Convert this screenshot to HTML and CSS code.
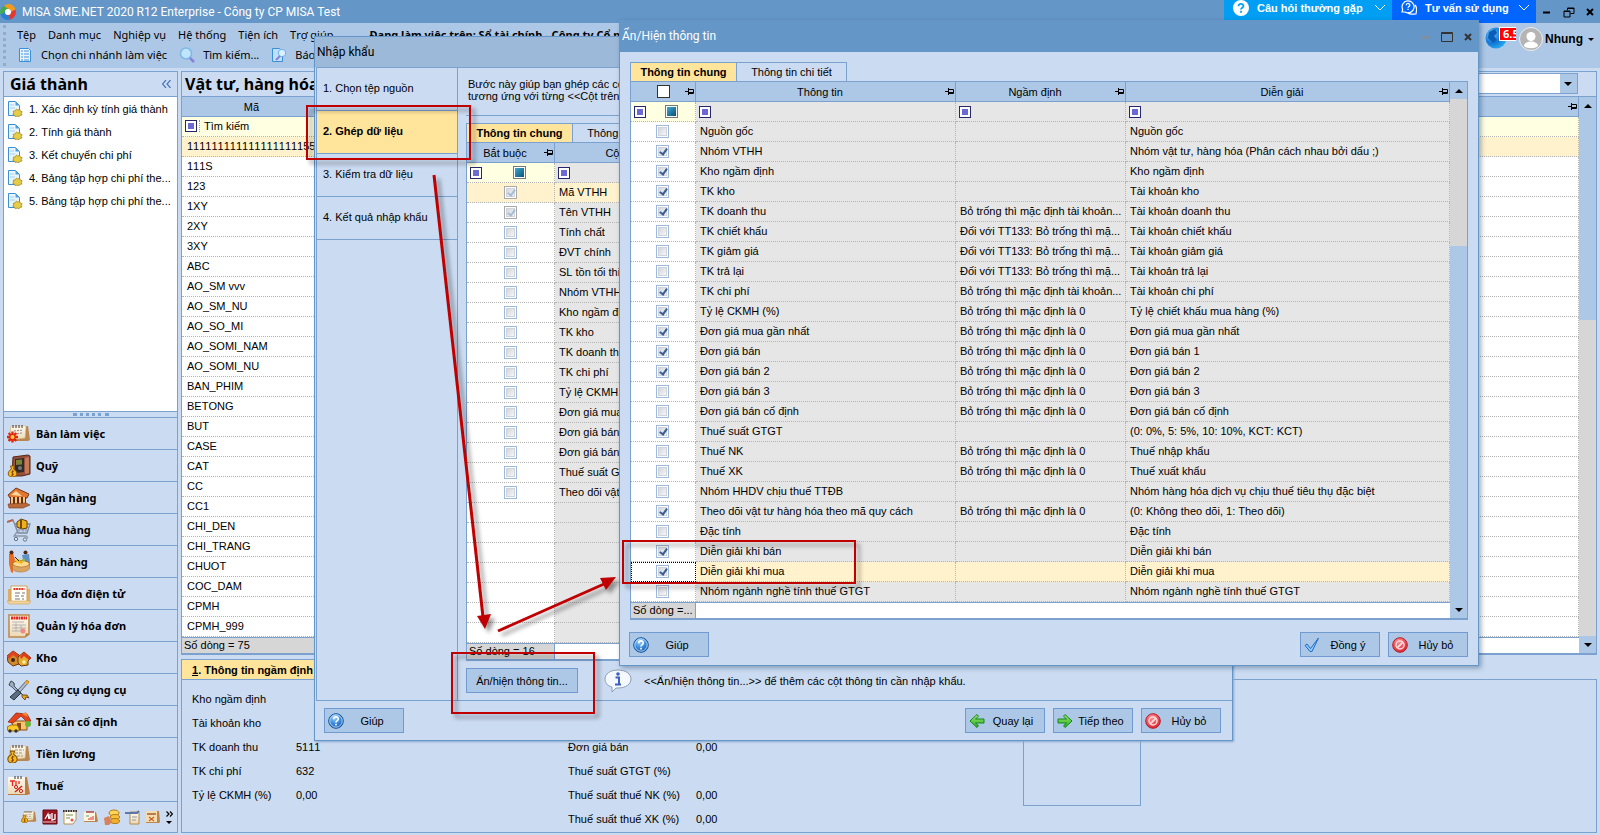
FILE: index.html
```html
<!DOCTYPE html>
<html lang="vi">
<head>
<meta charset="utf-8">
<title>MISA SME.NET 2020</title>
<link rel="stylesheet" href="styles.css">
</head>
<body>
<svg class="defs" aria-hidden="true">
  <defs>
    <linearGradient id="gPaper" x1="0" y1="0" x2="0" y2="1"><stop offset="0" stop-color="#fffaf0"/><stop offset="1" stop-color="#ecd9b4"/></linearGradient>
    <radialGradient id="gBlue" cx=".4" cy=".25" r=".8"><stop offset="0" stop-color="#9fd4fa"/><stop offset=".5" stop-color="#3e8fdd"/><stop offset="1" stop-color="#1557ab"/></radialGradient>
    <radialGradient id="gRed" cx=".4" cy=".25" r=".8"><stop offset="0" stop-color="#ff8d92"/><stop offset="1" stop-color="#d8232d"/></radialGradient>
    <linearGradient id="gGreen" x1="0" y1="0" x2="0" y2="1"><stop offset="0" stop-color="#a6ec70"/><stop offset="1" stop-color="#22aa22"/></linearGradient>
    <radialGradient id="gGlobe" cx=".3" cy=".3" r=".9"><stop offset="0" stop-color="#5cc4ff"/><stop offset=".5" stop-color="#1477d4"/><stop offset="1" stop-color="#2fc0fb"/></radialGradient>
  </defs>
  <symbol id="pin" viewBox="0 0 9 7"><path d="M0 3.500h3M3.500 0v7M3.500 1.500h5v4h-5M3 4.500h6" fill="none" stroke="#000"/></symbol>
  <symbol id="doc" viewBox="0 0 16 16"><path d="M1.500.5h7l4 4v10h-11z" fill="#e8f5ff" stroke="#3a90d8"/><path d="M8.500.5v4h4z" fill="#4c9fe0"/><path d="M3 4h4M3 7h5" stroke="#a6cdec"/><path d="M9.500 8l1.200 1 2-.6.5 1.600 2 .8-1 1.500.8 1.600-2 .5-1 1.300-1.800-.6-2 .5-.6-1.500-1.800-.7.8-1.600-.5-1.500 2-.4z" fill="#e5cd4a" stroke="#a5881c" stroke-width=".8"/></symbol>
  <symbol id="help" viewBox="0 0 16 16"><circle cx="8" cy="8" r="7.300" fill="url(#gBlue)" stroke="#17539b"/><circle cx="8" cy="8" r="6.200" fill="none" stroke="#cfe7fb" stroke-width=".8"/><path d="M5.700 6.200c0-3.200 4.700-3 4.600-.2 0 1.800-2.300 1.800-2.300 3.400M8 10.800v1.600" fill="none" stroke="#fff" stroke-width="1.600"/></symbol>
  <symbol id="no" viewBox="0 0 16 16"><circle cx="8" cy="8" r="7.300" fill="url(#gRed)" stroke="#b81c26"/><circle cx="8" cy="8" r="4" fill="none" stroke="#ffd9da" stroke-width="1.500"/><path d="M5 11l6-6" stroke="#ffd9da" stroke-width="1.800"/></symbol>
  <symbol id="left" viewBox="0 0 16 16"><path d="M1 8l7-6.500 1.500 1.800L6.500 6H15v4H6.500l3 2.700L8 14.500z" fill="url(#gGreen)" stroke="#15851c"/></symbol>
  <symbol id="right" viewBox="0 0 16 16"><path d="M15 8L8 1.500 6.500 3.300 9.500 6H1v4h8.500l-3 2.700L8 14.500z" fill="url(#gGreen)" stroke="#15851c"/></symbol>
  <symbol id="ok" viewBox="0 0 16 16"><path d="M1 8.500l2-1.500 3.500 4.500L14.500 1 8 14.500H6z" fill="#8fc6f7" stroke="#1c6dcc"/></symbol>
  <symbol id="cal" viewBox="0 0 24 24"><path d="M4 4h17l2 14-2 1H1z" fill="#b98650"/><path d="M4 4h15l-1 12-16 2z" fill="url(#gPaper)" stroke="#d8bd8d" stroke-width=".6"/><path d="M6 3v3M9 3v3M12 3v3M15 3v3" stroke="#40352c" stroke-width="1"/></symbol>
  <symbol id="bag" viewBox="0 0 10 12"><path d="M3 1h4L6 4c5 3 4 8-1 8S-1 7 4 4z" fill="#f7b91c" stroke="#8b5608"/><path d="M6.500 6.300C4 5.500 3.500 8 5 8.300s1.500 2.500-1.500 1.700M5 5.300v5.600" fill="none" stroke="#7c3d00" stroke-width=".8"/></symbol>
  <symbol id="i-desk" viewBox="0 0 24 24"><use href="#cal"/><path d="M7 9l9-1M7 12l8-1" stroke="#8a8a98" stroke-dasharray="2 1"/><g stroke="#e3240f" stroke-width="2.400"><path d="M5.500 9.500v11M0 15h11M1.700 11l7.600 8M9.300 11l-7.600 8"/></g><circle cx="5.500" cy="15" r="2" fill="#ffd23c"/></symbol>
  <symbol id="i-fund" viewBox="0 0 24 24"><path d="M6 3l15-2 2 1v18l-8 2H5z" fill="#985039" stroke="#57281a"/><path d="M8 5l9-1v14l-9 1z" fill="#2f2b28"/><path d="M9 6l6-.5v5L9 11z" fill="#7d8336"/><path d="M18 4l4-1v16l-4 1z" fill="#c57a58"/><circle cx="13" cy="14" r="2" fill="#777"/><use href="#bag" x="0" y="11" width="11" height="12"/></symbol>
  <symbol id="i-bank" viewBox="0 0 24 24"><path d="M1 9L9 2l13 6-2 4H3z" fill="#e2762e" stroke="#7c3615"/><path d="M4 9l5-4 6 5z" fill="#ffd79a"/><path d="M3 11h16v7H3z" fill="#5f2f17"/><path d="M5 11v8M9 11v8M13 11v8M17 11v7" stroke="#f7c382" stroke-width="2"/><path d="M1 18l18-1 4 2-7 3H2z" fill="#ba6a38" stroke="#7c3615" stroke-width=".6"/></symbol>
  <symbol id="i-buy" viewBox="0 0 24 24"><path d="M0 4l6-2 5 13h9l3-9H8" fill="none" stroke="#7e8aa0" stroke-width="1.300"/><path d="M0 4l6-2" stroke="#b5654d" stroke-width="2"/><path d="M9 9h12M10 12h10M12 6v9M16 6v9M19 6v9" stroke="#8b96ab" stroke-width=".8"/><path d="M10 4l4-3 6 2v7l-5 1-5-2z" fill="#f5b017" stroke="#644007"/><path d="M14 2v8" stroke="#3c2b10" stroke-width="1.500"/><path d="M10 14l-3 4h12l2 2" fill="none" stroke="#8b96ab" stroke-width="1.300"/><circle cx="9" cy="21" r="1.700" fill="#dde4ee" stroke="#68748a"/><circle cx="18" cy="21.500" r="1.700" fill="#dde4ee" stroke="#68748a"/></symbol>
  <symbol id="i-sell" viewBox="0 0 24 24"><path d="M2 4l4-1 2 7-2 5v8l-2-1-2-8z" fill="#ee6a1c"/><circle cx="4.500" cy="2.500" r="2" fill="#4d2916"/><circle cx="18.500" cy="2.500" r="2" fill="#4d2916"/><path d="M15 5l7-1 1 9-6 1z" fill="#5e92c4"/><ellipse cx="14" cy="14" rx="8.500" ry="3.500" fill="#ffd98e" stroke="#a76a23"/><path d="M5.500 14v5c2 4 14 4 17 0v-5c-2 4-14 4-17 0z" fill="#d9a561" stroke="#a76a23" stroke-width=".5"/><circle cx="11" cy="11" r="2" fill="#f3c01e"/><circle cx="14" cy="12" r="1.700" fill="#e9b116"/><circle cx="16.500" cy="10" r="1.500" fill="#9eb53a"/><path d="M8 7l4 4" stroke="#3d2612"/></symbol>
  <symbol id="i-einv" viewBox="0 0 24 24"><path d="M1 7h3v14H1zM20 7h3v14h-3z" fill="#dcae68"/><path d="M4 4h16v16H4z" fill="#fffdf6" stroke="#cfa15f"/><path d="M6.500 7h11" stroke="#e43524" stroke-width="2" stroke-dasharray="2 .6"/><path d="M8 11h5M8 14h4M8 17h5M15 11h3M14 14h3M15 17h2" stroke="#77777f"/><path d="M0 19h24l-2 3H2z" fill="#f0d49b" stroke="#cfa15f" stroke-width=".6"/></symbol>
  <symbol id="i-inv" viewBox="0 0 24 24"><path d="M2 1h20v19l-4 3H2z" fill="url(#gPaper)" stroke="#be8747" stroke-width="1.500"/><path d="M4 4h16" stroke="#e02a20" stroke-width="3" stroke-dasharray="2 .5"/><path d="M5 8h12M5 11h14M5 14h14M5 17h9M9 9v8M14 11v6" stroke="#a5a5aa" stroke-width=".8"/><circle cx="16" cy="17" r="2.500" fill="#ef8a86"/><path d="M18 23l1-4 3 1z" fill="#b97a3c"/></symbol>
  <symbol id="i-store" viewBox="0 0 24 24"><path d="M0 10l6-5 6 4v9l-6 2-5-4z" fill="#d18a2c" stroke="#6e350d"/><path d="M0 10l6-5 6 4-2 3-4-3-4 4z" fill="#df4320"/><path d="M11 11l6-5 7 6-3 3v4l-7 1-3-3z" fill="#e6ac30" stroke="#6e350d"/><path d="M13 11l4-5 7 6-2 2-5-4-3 3z" fill="#df3a1c"/><circle cx="6" cy="14" r="2" fill="#3f2412"/><circle cx="17" cy="16" r="1.800" fill="#fff0a0"/></symbol>
  <symbol id="i-tool" viewBox="0 0 24 24"><path d="M4 3l3 2 0 3 9 9 4 0 2 3-3-1-1 3-3-3 0-3-9-8-4-1z" fill="#f4a21d" stroke="#4a3a20" stroke-width=".8"/><path d="M4 3l3 2 0 3 4 4-2 1-4-4-3-2z" fill="#9fb0c4" stroke="#39485c" stroke-width=".8"/><path d="M20 2l2 2-9 10-2-2z" fill="#b5bfcc" stroke="#39485c" stroke-width=".8"/><path d="M11 12l3 3-7 7-4-3z" fill="#5c6c80" stroke="#2c3644"/><path d="M18 3l3-1 1 3-2 2z" fill="#f4a21d"/></symbol>
  <symbol id="i-asset" viewBox="0 0 24 24"><path d="M4 11h16v9H8z" fill="#f7c46c" stroke="#8b4a1a"/><path d="M1 12L9 3l11 1 4 7-4 1-6-6-8 7z" fill="#e2421c" stroke="#8a2408" stroke-width=".7"/><path d="M15 4l4-2 2 5z" fill="#f58b35"/><path d="M10 13h4v7h-4z" fill="#8c4b1c"/><path d="M0 17l4-2h6l2 3v3H1z" fill="#ffca25" stroke="#8b5608" stroke-width=".8"/><circle cx="3" cy="21" r="1.700" fill="#333"/><circle cx="9" cy="21" r="1.700" fill="#333"/><circle cx="21" cy="14" r="3" fill="#69b53c"/></symbol>
  <symbol id="i-pay" viewBox="0 0 24 24"><use href="#cal"/><path d="M8 8h9M8 11h8M10 14h6" stroke="#9b9b84" stroke-dasharray="3 1"/><use href="#bag" x="0" y="8" width="11" height="13"/></symbol>
  <symbol id="i-tax" viewBox="0 0 24 24"><path d="M1 3h19l3 17-3 1H1z" fill="#b97e46"/><path d="M1 3h17v17H1z" fill="url(#gPaper)"/><path d="M8 2v3M11 2v3M14 2v3" stroke="#333"/><path d="M3 7h5M5.500 7v5M9 7v5M12 7v3" stroke="#e3281d" stroke-width="1.300"/><path d="M8 18l7-6" stroke="#d2201a" stroke-width="1.500"/><circle cx="9" cy="13" r="1.600" fill="none" stroke="#d2201a"/><circle cx="14" cy="17" r="1.600" fill="none" stroke="#d2201a"/></symbol>
</svg>

<header class="titlebar">
  <svg class="logo" viewBox="0 0 16 16"><path d="M8 0a8 8 0 0 1 7.500 5.500L11 8a3 3 0 0 0-3-3L4 2A8 8 0 0 1 8 0z" fill="#f39a1e"/><path d="M15.500 5.500A8 8 0 0 1 10 15.700L8 11a3 3 0 0 0 3-3z" fill="#e5382c"/><path d="M10 15.700A8 8 0 0 1 .4 10.500L5 8a3 3 0 0 0 3 3z" fill="#2a7fd5"/><path d="M.4 10.500A8 8 0 0 1 4 2l4 3a3 3 0 0 0-3 3z" fill="#3fae49"/><circle cx="8" cy="8" r="3" fill="#fff"/></svg>
  <h1>MISA SME.NET 2020 R12 Enterprise - Công ty CP MISA Test</h1>
  <button class="faq"><svg class="s16" viewBox="0 0 16 16"><circle cx="8" cy="8" r="8" fill="#fff"/><path d="M5.500 6.200c0-3.200 5-3 4.900-.2 0 1.800-2.400 1.600-2.400 3.400M8 10.800v1.900" fill="none" stroke="#00a0f0" stroke-width="1.800"/></svg>Câu hỏi thường gặp<svg class="chev" viewBox="0 0 10 6"><path d="M0 0l5 5 5-5" fill="none" stroke="#fff"/></svg></button>
  <button class="faq consult"><svg class="s16" viewBox="0 0 16 16"><path d="M1 12l.7-2.500A6 6 0 1 1 4 12z" fill="none" stroke="#fff" stroke-width="1.200"/><path d="M14 5c3 3 1 7 1 9-4 0-6 1-8-1" fill="none" stroke="#fff" stroke-width="1.200"/><path d="M5.300 5.200c0-2.400 3.600-2.200 3.500 0 0 1.300-1.800 1.300-1.800 2.600M7 8.700v1.300" fill="none" stroke="#fff" stroke-width="1.300"/></svg>Tư vấn sử dụng<svg class="chev" viewBox="0 0 10 6"><path d="M0 0l5 5 5-5" fill="none" stroke="#fff"/></svg></button>
  <div class="winctl">
    <button aria-label="Minimize"><svg viewBox="0 0 12 12"><path d="M2 6.500h7" stroke="#000" stroke-width="2"/></svg></button>
    <button aria-label="Restore"><svg viewBox="0 0 12 12"><path d="M1 5h6v6H1zM1 5.500h6M4.500 4.500V2h6.500v5.500H7.500M4.500 2.500H11" fill="none" stroke="#000"/></svg></button>
    <button aria-label="Close"><svg viewBox="0 0 12 12"><path d="M3 3l6 6M9 3L3 9" stroke="#000" stroke-width="2"/></svg></button>
  </div>
</header>

<div class="bars">
  <div class="barrows">
    <nav class="menu">
      <button>Tệp</button><button>Danh mục</button><button>Nghiệp vụ</button><button>Hệ thống</button><button>Tiện ích</button><button>Trợ giúp</button>
      <strong>Đang làm việc trên: Sổ tài chính - Công ty Cổ phần MISA Test</strong>
    </nav>
    <div class="toolbar">
      <button><svg class="s16" viewBox="0 0 16 16"><path d="M2.500 1.500h9l2 2v11h-11z" fill="#e3f3ff" stroke="#3a90d8"/><path d="M4 4h2M4 7h2M4 10h2M4 13h2M7 4h5M7 7h5M7 10h5M7 13h5" stroke="#4c8fd0"/></svg>Chọn chi nhánh làm việc</button>
      <button><svg class="s16" viewBox="0 0 16 16"><circle cx="7" cy="6.500" r="5.500" fill="#bfe5fb" stroke="#7fb7e6" stroke-width="1.500"/><path d="M11 11l4 4" stroke="#8a82d8" stroke-width="2.500"/></svg>Tìm kiếm...</button>
      <button><svg class="s16" viewBox="0 0 16 16"><path d="M1.500 1.500h7l3 3v10h-10z" fill="#bfe0fa" stroke="#3a90d8"/><circle cx="11" cy="6" r="3.700" fill="#d9f0ff" stroke="#6faee4"/><path d="M9 9l-4 4" stroke="#8a82d8" stroke-width="2"/></svg>Báo cáo</button>
    </div>
  </div>
  <div class="user">
    <span class="globe"><svg viewBox="0 0 22 22"><circle cx="11" cy="11" r="10.500" fill="url(#gGlobe)"/><path d="M4 5l6-3 2 4-3 3 3 4-4 3-5-5z" fill="#0c5db5"/></svg><b>6.5</b></span>
    <svg class="avatar" viewBox="0 0 24 24"><circle cx="12" cy="12" r="11.500" fill="#b5b5b5" stroke="#eee"/><circle cx="12" cy="9.500" r="4.500" fill="#fff"/><path d="M5 19c0-6 14-6 14 0-3 3-11 3-14 0z" fill="#fff"/></svg>
    <button>Nhung<i class="caret"></i></button>
  </div>
</div>

<div class="work">
  <aside class="side">
    <h2>Giá thành<svg viewBox="0 0 9 8"><path d="M4 0L.5 4 4 8M8.500 0L5 4l3.500 4" fill="none" stroke="#4a76b8" stroke-width="1.200"/></svg></h2>
    <ul class="tasks">
      <li><a href="#"><svg class="s16"><use href="#doc"/></svg>1. Xác định kỳ tính giá thành</a></li>
      <li><a href="#"><svg class="s16"><use href="#doc"/></svg>2. Tính giá thành</a></li>
      <li><a href="#"><svg class="s16"><use href="#doc"/></svg>3. Kết chuyển chi phí</a></li>
      <li><a href="#"><svg class="s16"><use href="#doc"/></svg>4. Bảng tập hợp chi phí the...</a></li>
      <li><a href="#"><svg class="s16"><use href="#doc"/></svg>5. Bảng tập hợp chi phí the...</a></li>
    </ul>
    <div class="grip"><i></i></div>
    <nav class="mods">
      <button><svg><use href="#i-desk"/></svg>Bàn làm việc</button>
      <button><svg><use href="#i-fund"/></svg>Quỹ</button>
      <button><svg><use href="#i-bank"/></svg>Ngân hàng</button>
      <button><svg><use href="#i-buy"/></svg>Mua hàng</button>
      <button><svg><use href="#i-sell"/></svg>Bán hàng</button>
      <button><svg><use href="#i-einv"/></svg>Hóa đơn điện tử</button>
      <button><svg><use href="#i-inv"/></svg>Quản lý hóa đơn</button>
      <button><svg><use href="#i-store"/></svg>Kho</button>
      <button><svg><use href="#i-tool"/></svg>Công cụ dụng cụ</button>
      <button><svg><use href="#i-asset"/></svg>Tài sản cố định</button>
      <button><svg><use href="#i-pay"/></svg>Tiền lương</button>
      <button><svg><use href="#i-tax"/></svg>Thuế</button>
    </nav>
    <div class="shortcuts">
      <svg class="s16"><use href="#i-pay"/></svg>
      <svg class="s16" viewBox="0 0 16 16"><path d="M1 1h14v14H1z" fill="#9b1420" stroke="#5e0a12"/><path d="M3 10l3-5 1 5M8 10V5M10 4v7l3-1V5" fill="none" stroke="#fff" stroke-width="1.300"/><path d="M1 13h13" stroke="#e6c7c9"/></svg>
      <svg class="s16" viewBox="0 0 16 16"><path d="M2 2h12v9l-3 4H2z" fill="#fffdf6" stroke="#b99156"/><path d="M1 2h14" stroke="#333" stroke-width="2" stroke-dasharray="1.500 1"/><path d="M4 6h7M4 9h4" stroke="#7b8f50"/><circle cx="10" cy="11" r="1.500" fill="#e2574c"/></svg>
      <svg class="s16" viewBox="0 0 16 16"><path d="M1 3h12l2 9-1 1H1z" fill="#b98650"/><path d="M1 3h11v9H1z" fill="#fff5dd"/><path d="M3 3h8" stroke="#a44" stroke-width="1.500"/><path d="M8 11V8M10 11V7M6 11V9" stroke="#d33"/><path d="M3 7h3" stroke="#4a8"/></svg>
      <svg class="s16" viewBox="0 0 16 16"><ellipse cx="10" cy="4" rx="5" ry="3" fill="#ffd65a" stroke="#b57a10"/><ellipse cx="11" cy="8" rx="4.500" ry="2.500" fill="#f8c33c" stroke="#b57a10"/><ellipse cx="11" cy="12" rx="4.500" ry="2.500" fill="#f0b22c" stroke="#b57a10"/><path d="M0 9l5-2 3 6-3 3H1z" fill="#d8825a"/></svg>
      <svg class="s16" viewBox="0 0 16 16"><path d="M5 3h9v12H5z" fill="url(#gPaper)" stroke="#b78a4a"/><path d="M0 4h12l2-2" stroke="#5b77ad" stroke-width="2" fill="none"/><path d="M7 8h5M7 11h4" stroke="#8d9aad"/></svg>
      <svg class="s16" viewBox="0 0 16 16"><path d="M1 2h13l1 11-1 1H1z" fill="#b98650"/><path d="M1 2h11v11H1z" fill="#f5ddb2"/><path d="M2 5h9" stroke="#a55c2a" stroke-width="1.500"/><path d="M4 8l5 4M9 8l-5 4" stroke="#c5642a" stroke-width="1.300"/></svg>
      <span class="more"><svg viewBox="0 0 7 6"><path d="M0.500 0.500l2.500 2.500-2.500 2.500M4 .5l2.500 2.500-2.500 2.500" fill="none" stroke="#000" stroke-width="1.200"/></svg><i class="caret"></i></span>
    </div>
  </aside>

  <main class="main">
    <section class="list">
      <div class="listhead"><h2>Vật tư, hàng hóa, dịch vụ</h2><select aria-label="Nhóm"><option></option></select></div>
      <div class="gridbox">
        <div class="gridmain">
          <table class="grid codes">
            <colgroup><col class="w140"><col></colgroup>
            <thead><tr><th>Mã</th><th><svg class="pin"><use href="#pin"/></svg></th></tr></thead>
            <tbody>
              <tr class="filter"><td><i class="op"></i><span>Tìm kiếm</span></td><td></td></tr>
              <tr class="sel"><td>111111111111111111155</td><td></td></tr>
              <tr><td>111S</td><td></td></tr><tr><td>123</td><td></td></tr><tr><td>1XY</td><td></td></tr><tr><td>2XY</td><td></td></tr><tr><td>3XY</td><td></td></tr><tr><td>ABC</td><td></td></tr><tr><td>AO_SM vvv</td><td></td></tr><tr><td>AO_SM_NU</td><td></td></tr><tr><td>AO_SO_MI</td><td></td></tr><tr><td>AO_SOMI_NAM</td><td></td></tr><tr><td>AO_SOMI_NU</td><td></td></tr><tr><td>BAN_PHIM</td><td></td></tr><tr><td>BETONG</td><td></td></tr><tr><td>BUT</td><td></td></tr><tr><td>CASE</td><td></td></tr><tr><td>CAT</td><td></td></tr><tr><td>CC</td><td></td></tr><tr><td>CC1</td><td></td></tr><tr><td>CHI_DEN</td><td></td></tr><tr><td>CHI_TRANG</td><td></td></tr><tr><td>CHUOT</td><td></td></tr><tr><td>COC_DAM</td><td></td></tr><tr><td>CPMH</td><td></td></tr><tr><td>CPMH_999</td><td></td></tr>
            </tbody>
          </table>
          <div class="gridfoot"><span class="w140">Số dòng = 75</span></div>
        </div>
        <div class="scroll"><i class="up"></i><b class="thumb mainthumb"></b><b class="rest"></b><i class="down"></i></div>
      </div>
    </section>

    <section class="detail">
      <div class="dtabs"><button><span><u>1</u>. Thông tin ngầm định</span></button></div>
      <div class="dbody">
        <dl class="fields">
          <dt>Kho ngầm định</dt><dd></dd><dt></dt><dd></dd>
          <dt>Tài khoản kho</dt><dd></dd><dt></dt><dd></dd>
          <dt>TK doanh thu</dt><dd>5111</dd><dt>Đơn giá bán</dt><dd>0,00</dd>
          <dt>TK chi phí</dt><dd>632</dd><dt>Thuế suất GTGT (%)</dt><dd></dd>
          <dt>Tỷ lệ CKMH (%)</dt><dd>0,00</dd><dt>Thuế suất thuế NK (%)</dt><dd>0,00</dd>
          <dt></dt><dd></dd><dt>Thuế suất thuế XK (%)</dt><dd>0,00</dd>
        </dl>
        <div class="photo"></div>
      </div>
    </section>
  </main>
</div>

<section class="dlg import" role="dialog" aria-label="Nhập khẩu">
  <h2 class="dtitle">Nhập khẩu</h2>
  <div class="wizard">
    <ol class="steps">
      <li>1. Chọn tệp nguồn</li><li class="on">2. Ghép dữ liệu</li><li>3. Kiểm tra dữ liệu</li><li>4. Kết quả nhập khẩu</li>
    </ol>
    <div class="stepbody">
      <p class="hint">Bước này giúp bạn ghép các cột trên phần mềm<br>tương ứng với từng &lt;&lt;Cột trên phần mềm&gt;&gt;</p>
      <div class="tabs"><button class="on">Thông tin chung</button><button>Thông tin chi tiết</button></div>
      <div class="gridbox">
        <div class="gridmain">
          <table class="grid gray">
            <colgroup><col class="w88"><col class="w196"><col></colgroup>
            <thead><tr><th class="padpin">Bắt buộc<svg class="pin"><use href="#pin"/></svg></th><th>Cột trên phần mềm</th><th>Diễn giải</th></tr></thead>
            <tbody>
              <tr class="filter"><td><i class="op"></i><i class="tri"></i></td><td><i class="op"></i></td><td></td></tr>
              <tr class="sel"><td><input type="checkbox" checked disabled aria-label="Mã VTHH"></td><td>Mã VTHH</td><td></td></tr>
              <tr><td><input type="checkbox" checked disabled aria-label="Tên VTHH"></td><td>Tên VTHH</td><td></td></tr>
              <tr><td><input type="checkbox" aria-label="Tính chất"></td><td>Tính chất</td><td></td></tr>
              <tr><td><input type="checkbox" aria-label="ĐVT chính"></td><td>ĐVT chính</td><td></td></tr>
              <tr><td><input type="checkbox" aria-label="SL tồn tối thiểu"></td><td>SL tồn tối thiểu</td><td></td></tr>
              <tr><td><input type="checkbox" aria-label="Nhóm VTHH"></td><td>Nhóm VTHH</td><td></td></tr>
              <tr><td><input type="checkbox" aria-label="Kho ngầm định"></td><td>Kho ngầm định</td><td></td></tr>
              <tr><td><input type="checkbox" aria-label="TK kho"></td><td>TK kho</td><td></td></tr>
              <tr><td><input type="checkbox" aria-label="TK doanh thu"></td><td>TK doanh thu</td><td></td></tr>
              <tr><td><input type="checkbox" aria-label="TK chi phí"></td><td>TK chi phí</td><td></td></tr>
              <tr><td><input type="checkbox" aria-label="Tỷ lệ CKMH (%)"></td><td>Tỷ lệ CKMH (%)</td><td></td></tr>
              <tr><td><input type="checkbox" aria-label="Đơn giá mua gần nhất"></td><td>Đơn giá mua gần nhất</td><td></td></tr>
              <tr><td><input type="checkbox" aria-label="Đơn giá bán"></td><td>Đơn giá bán</td><td></td></tr>
              <tr><td><input type="checkbox" aria-label="Đơn giá bán 2"></td><td>Đơn giá bán 2</td><td></td></tr>
              <tr><td><input type="checkbox" aria-label="Thuế suất GTGT"></td><td>Thuế suất GTGT</td><td></td></tr>
              <tr><td><input type="checkbox" aria-label="Theo dõi vật tư"></td><td>Theo dõi vật tư hàng hóa</td><td></td></tr>
              <tr><td></td><td></td><td></td></tr><tr><td></td><td></td><td></td></tr><tr><td></td><td></td><td></td></tr><tr><td></td><td></td><td></td></tr><tr><td></td><td></td><td></td></tr><tr><td></td><td></td><td></td></tr><tr><td></td><td></td><td></td></tr>
            </tbody>
          </table>
          <div class="gridfoot"><span class="w88">Số dòng = 16</span></div>
        </div>
      </div>
      <div class="note">
        <button class="btn wide">Ẩn/hiện thông tin...</button>
        <svg class="balloon" viewBox="0 0 28 24"><path d="M14 1c8 0 13 4 13 9s-5 9-13 9l-2 0-4 4v-5C3 17 1 13 1 10c0-5 5-9 13-9z" fill="#f4f9ff" stroke="#8d9db5"/><circle cx="14" cy="5" r="1.800" fill="#3d5fc0"/><path d="M11.500 8.500h3.500v6M11 15.500h6" fill="none" stroke="#3d5fc0" stroke-width="2"/></svg>
        <span>&lt;&lt;Ẩn/hiện thông tin...&gt;&gt; để thêm các cột thông tin cần nhập khẩu.</span>
      </div>
    </div>
  </div>
  <div class="dfoot">
    <button class="btn"><svg class="s16"><use href="#help"/></svg><span>Giúp</span></button>
    <button class="btn push"><svg class="s16"><use href="#left"/></svg><span>Quay lại</span></button>
    <button class="btn"><svg class="s16"><use href="#right"/></svg><span>Tiếp theo</span></button>
    <button class="btn"><svg class="s16"><use href="#no"/></svg><span>Hủy bỏ</span></button>
  </div>
</section>

<section class="dlg show" role="dialog" aria-label="Ẩn/Hiện thông tin">
  <h2 class="dtitle">Ẩn/Hiện thông tin
    <span class="dctl"><svg viewBox="0 0 12 12"><path d="M2 6.500h7" stroke="#8c8c8c" stroke-width="2"/></svg><svg viewBox="0 0 12 12"><path d="M.5 1.500h11v9H.5zM0 2.500h12" fill="none" stroke="#333"/></svg><svg viewBox="0 0 12 12"><path d="M3 3l6 6M9 3L3 9" stroke="#333" stroke-width="2"/></svg></span>
  </h2>
  <div class="showbody">
    <div class="tabs"><button class="on">Thông tin chung</button><button>Thông tin chi tiết</button></div>
    <div class="gridbox">
      <div class="gridmain">
        <table class="grid gray">
          <colgroup><col class="w65"><col class="w260"><col class="w170"><col></colgroup>
          <thead><tr><th><input type="checkbox" class="all" aria-label="Tất cả"><svg class="pin"><use href="#pin"/></svg></th><th class="padpin">Thông tin<svg class="pin"><use href="#pin"/></svg></th><th class="padpin">Ngầm định<svg class="pin"><use href="#pin"/></svg></th><th class="padpin">Diễn giải<svg class="pin"><use href="#pin"/></svg></th></tr></thead>
          <tbody>
            <tr class="filter"><td><i class="op"></i><i class="tri"></i></td><td><i class="op"></i></td><td><i class="op"></i></td><td><i class="op"></i></td></tr>
            <tr><td><input type="checkbox" aria-label="Nguồn gốc"></td><td>Nguồn gốc</td><td></td><td>Nguồn gốc</td></tr>
            <tr><td><input type="checkbox" checked aria-label="Nhóm VTHH"></td><td>Nhóm VTHH</td><td></td><td>Nhóm vật tư, hàng hóa (Phân cách nhau bởi dấu ;)</td></tr>
            <tr><td><input type="checkbox" checked aria-label="Kho ngầm định"></td><td>Kho ngầm định</td><td></td><td>Kho ngầm định</td></tr>
            <tr><td><input type="checkbox" checked aria-label="TK kho"></td><td>TK kho</td><td></td><td>Tài khoản kho</td></tr>
            <tr><td><input type="checkbox" checked aria-label="TK doanh thu"></td><td>TK doanh thu</td><td>Bỏ trống thì mặc định tài khoản...</td><td>Tài khoản doanh thu</td></tr>
            <tr><td><input type="checkbox" aria-label="TK chiết khấu"></td><td>TK chiết khấu</td><td>Đối với TT133: Bỏ trống thì mặ...</td><td>Tài khoản chiết khấu</td></tr>
            <tr><td><input type="checkbox" aria-label="TK giảm giá"></td><td>TK giảm giá</td><td>Đối với TT133: Bỏ trống thì mặ...</td><td>Tài khoản giảm giá</td></tr>
            <tr><td><input type="checkbox" aria-label="TK trả lại"></td><td>TK trả lại</td><td>Đối với TT133: Bỏ trống thì mặ...</td><td>Tài khoản trả lại</td></tr>
            <tr><td><input type="checkbox" checked aria-label="TK chi phí"></td><td>TK chi phí</td><td>Bỏ trống thì mặc định tài khoản...</td><td>Tài khoản chi phí</td></tr>
            <tr><td><input type="checkbox" checked aria-label="Tỷ lệ CKMH (%)"></td><td>Tỷ lệ CKMH (%)</td><td>Bỏ trống thì mặc định là 0</td><td>Tỷ lệ chiết khấu mua hàng (%)</td></tr>
            <tr><td><input type="checkbox" checked aria-label="Đơn giá mua gần nhất"></td><td>Đơn giá mua gần nhất</td><td>Bỏ trống thì mặc định là 0</td><td>Đơn giá mua gần nhất</td></tr>
            <tr><td><input type="checkbox" checked aria-label="Đơn giá bán"></td><td>Đơn giá bán</td><td>Bỏ trống thì mặc định là 0</td><td>Đơn giá bán 1</td></tr>
            <tr><td><input type="checkbox" checked aria-label="Đơn giá bán 2"></td><td>Đơn giá bán 2</td><td>Bỏ trống thì mặc định là 0</td><td>Đơn giá bán 2</td></tr>
            <tr><td><input type="checkbox" aria-label="Đơn giá bán 3"></td><td>Đơn giá bán 3</td><td>Bỏ trống thì mặc định là 0</td><td>Đơn giá bán 3</td></tr>
            <tr><td><input type="checkbox" aria-label="Đơn giá bán cố định"></td><td>Đơn giá bán cố định</td><td>Bỏ trống thì mặc định là 0</td><td>Đơn giá bán cố định</td></tr>
            <tr><td><input type="checkbox" checked aria-label="Thuế suất GTGT"></td><td>Thuế suất GTGT</td><td></td><td>(0: 0%, 5: 5%, 10: 10%, KCT: KCT)</td></tr>
            <tr><td><input type="checkbox" aria-label="Thuế NK"></td><td>Thuế NK</td><td>Bỏ trống thì mặc định là 0</td><td>Thuế nhập khẩu</td></tr>
            <tr><td><input type="checkbox" aria-label="Thuế XK"></td><td>Thuế XK</td><td>Bỏ trống thì mặc định là 0</td><td>Thuế xuất khẩu</td></tr>
            <tr><td><input type="checkbox" aria-label="Nhóm HHDV chịu thuế TTĐB"></td><td>Nhóm HHDV chịu thuế TTĐB</td><td></td><td>Nhóm hàng hóa dịch vụ chịu thuế tiêu thụ đặc biệt</td></tr>
            <tr><td><input type="checkbox" checked aria-label="Theo dõi vật tư hàng hóa theo mã quy cách"></td><td>Theo dõi vật tư hàng hóa theo mã quy cách</td><td>Bỏ trống thì mặc định là 0</td><td>(0: Không theo dõi, 1: Theo dõi)</td></tr>
            <tr><td><input type="checkbox" aria-label="Đặc tính"></td><td>Đặc tính</td><td></td><td>Đặc tính</td></tr>
            <tr><td><input type="checkbox" checked aria-label="Diễn giải khi bán"></td><td>Diễn giải khi bán</td><td></td><td>Diễn giải khi bán</td></tr>
            <tr class="sel"><td class="focus"><input type="checkbox" checked aria-label="Diễn giải khi mua"></td><td>Diễn giải khi mua</td><td></td><td>Diễn giải khi mua</td></tr>
            <tr><td><input type="checkbox" aria-label="Nhóm ngành nghề tính thuế GTGT"></td><td>Nhóm ngành nghề tính thuế GTGT</td><td></td><td>Nhóm ngành nghề tính thuế GTGT</td></tr>
          </tbody>
        </table>
        <div class="gridfoot"><span class="w65">Số dòng =...</span></div>
      </div>
      <div class="scroll"><i class="up"></i><b class="rest above"></b><b class="thumb fill"></b><i class="down"></i></div>
    </div>
  </div>
  <div class="dfoot">
    <button class="btn"><svg class="s16"><use href="#help"/></svg><span>Giúp</span></button>
    <button class="btn push"><svg class="s16"><use href="#ok"/></svg><span>Đồng ý</span></button>
    <button class="btn"><svg class="s16"><use href="#no"/></svg><span>Hủy bỏ</span></button>
  </div>
</section>

<svg class="marks" aria-hidden="true">
  <g fill="none" stroke="#c00000" stroke-width="2">
    <rect x="307" y="106" width="163" height="53"/>
    <rect x="452" y="653" width="142" height="60"/>
    <rect x="623" y="541" width="232" height="42"/>
  </g>
  <g fill="#c00000" stroke="#c00000">
    <path d="M434 175l49 442" stroke-width="3"/><path d="M477 616l14-2-6 15z" stroke="none"/>
    <path d="M498 631l106-47" stroke-width="3"/><path d="M600 578l16-1-10 13z" stroke="none"/>
  </g>
</svg>
</body>
</html>
```
FILE: styles.css
```css
* { box-sizing: border-box; }
body {
  margin: 0; min-height: 100vh; display: flex; flex-direction: column; position: relative;
  background: #cbdbf1; color: #000; font: 11px/14px "Noto Sans", Tahoma, sans-serif; font-kerning: none; overflow: hidden;
}
h1, h2, p, ul, ol, dl, dd { margin: 0; padding: 0; }
ul, ol { list-style: none; }
button { font: inherit; font-kerning: none; color: inherit; background: none; border: 0; padding: 0; white-space: nowrap; }
a { color: inherit; text-decoration: none; }
svg { display: block; flex: none; }
.defs { position: absolute; width: 0; height: 0; }
.s16 { width: 16px; height: 16px; }
.caret { display: inline-block; border: 3px solid transparent; border-top-color: #000; border-bottom: 0; }

.titlebar { height: 23px; display: flex; align-items: center; background: #6496c7; color: #fff; }
.logo { width: 16px; height: 16px; }
.titlebar h1 { flex: 1; margin-left: 6px; font: 12px/16px Roboto, Tahoma, sans-serif; }
.faq { align-self: stretch; display: flex; align-items: center; gap: 8px; width: 168px; padding: 0 7px 7px 9px; background: #009ff3; font: bold 11px/16px "Liberation Sans", Arial, sans-serif; }
.consult { width: 144px; background: #0066ff; }
.chev { width: 10px; height: 6px; margin-left: auto; }
.winctl { display: flex; width: 64px; justify-content: space-between; padding: 0 4px 0 5px; }
.winctl svg { width: 12px; height: 12px; }

.bars { display: flex; justify-content: space-between; height: 45px; background: #adc8e7; }
.barrows { display: flex; flex-direction: column; border-left: 3px dotted #93abc9; margin: 2px 0 2px 3px; padding-left: 11px; }
.menu { display: flex; align-items: center; gap: 12px; height: 19px; white-space: nowrap; }
.menu strong { margin-left: 24px; }
.toolbar { display: flex; align-items: center; gap: 12px; height: 22px; }
.toolbar button { display: flex; align-items: center; gap: 8px; }
.user { display: flex; align-items: flex-start; padding: 4px 6px 0 0; }
.globe { position: relative; width: 34px; height: 24px; }
.globe svg { width: 22px; height: 22px; }
.globe b { position: absolute; left: 14px; top: 0; width: 17px; overflow: hidden; padding-left: 3px; background: #f00; border: 1px solid #fff; border-right: 0; color: #fff; line-height: 12px; }
.avatar { width: 24px; height: 24px; margin-right: 2px; }
.user button { font: bold 12px/24px "Liberation Sans", Arial, sans-serif; display: flex; align-items: center; gap: 5px; }

.work { flex: 1; display: flex; gap: 3px; padding: 3px 3px 2px; }
.side { width: 175px; flex: none; display: flex; flex-direction: column; border: 1px solid #7ba1cf; }
.side h2, .listhead h2 { font-size: 16px; line-height: 24px; }
.side h2 { display: flex; justify-content: space-between; align-items: center; padding: 0 6px; height: 25px; border-bottom: 1px solid #7ba1cf; }
.side h2 svg { width: 9px; height: 8px; }
.tasks { flex: 1; background: #fff; font-family: "Liberation Sans", Arial, sans-serif; }
.tasks a { display: flex; align-items: center; gap: 6px; height: 23px; padding-left: 3px; white-space: nowrap; }
.grip { height: 6px; border-top: 1px solid #7ba1cf; display: flex; justify-content: center; }
.grip i { width: 36px; margin: 1px 0; border-top: 3px dotted #7ba1cf; }
.mods button { width: 100%; height: 32px; display: flex; align-items: center; gap: 5px; padding-left: 3px; border-top: 1px solid #7ba1cf; font-weight: bold; }
.mods svg { width: 24px; height: 24px; }
.shortcuts { height: 31px; border-top: 1px solid #7ba1cf; display: flex; align-items: center; justify-content: space-between; padding: 0 4px 0 17px; }
.more { display: flex; flex-direction: column; align-items: center; gap: 4px; }
.more svg { width: 7px; height: 6px; }

.main { flex: 1; min-width: 0; display: flex; flex-direction: column; gap: 4px; }
.list { border: 1px solid #7ba1cf; border-bottom: 0; }
.listhead { position: relative; height: 24px; display: flex; justify-content: space-between; padding-left: 3px; }
.listhead select { width: 300px; height: 21px; margin: 1px 18px 0 0; border: 1px solid #7ba1cf; background: linear-gradient(90deg, #fff 281px, #adc8e7 281px); appearance: none; }
.listhead::after { content: ""; position: absolute; right: 24px; top: 10px; border: 4px solid transparent; border-top-color: #000; border-bottom: 0; }

.gridbox { display: flex; border: 1px solid #7ba1cf; border-bottom-width: 2px; font-family: "Liberation Sans", Arial, sans-serif; }
.list .gridbox { border-left: 0; border-right: 0; }
.gridmain { flex: 1; min-width: 0; background: #fff; }
.grid { width: 100%; table-layout: fixed; border-spacing: 0; }
.grid th { position: relative; height: 20px; padding: 0; background: #adc8e7; border-right: 1px solid #7ba1cf; border-bottom: 1px solid #7ba1cf; font-weight: 400; text-align: center; white-space: nowrap; }
.grid th.padpin { padding-right: 11px; }
.pin { position: absolute; right: 1px; top: 6px; width: 9px; height: 7px; }
.grid td { height: 20px; padding: 0 0 0 4px; border-right: 1px dotted #b4b4b4; border-bottom: 1px dotted #b4b4b4; white-space: nowrap; overflow: hidden; line-height: 15px; }
.codes td { padding-left: 5px; }
.gray td { background: #e6e6e6; }
.gray td:first-child { background: #fff; padding: 0 1px 0 0; text-align: center; }
.grid .sel td { background: #fff2cc; }
.grid .sel td.focus { background: #fff; outline: 1px dotted #000; outline-offset: -1px; }
.grid .filter td, .gray .filter td:first-child { background: #ffffe1; }
.gray .filter td { background: #e6e6e6; }
.grid .filter td { padding: 0 0 1px 3px; }
.filter span { margin-left: 2px; vertical-align: middle; }
.gray .filter td:first-child { text-align: left; }
.op { display: inline-block; vertical-align: middle; width: 12px; height: 12px; border: 1px solid #26266c; background: #6a6ad2; box-shadow: inset 0 0 0 2px #fff; }
.gray .op { margin-right: 2px; }
.op + span { border-left: 1px dotted #999; padding-left: 4px; line-height: 18px; }
.tri { display: inline-block; vertical-align: middle; width: 13px; height: 13px; margin-left: 17px; border: 1px solid #777; background: linear-gradient(135deg, #40b4d8, #0b4670); box-shadow: inset 0 0 0 1px #fff; }
.import .tri { margin-left: 29px; }
input[type=checkbox] { appearance: none; display: inline-block; vertical-align: middle; position: relative; width: 13px; height: 13px; margin: 0 0 1px; border: 1px solid #9db9dd; background: linear-gradient(135deg, #c9cdd4, #fff); box-shadow: inset 0 0 0 1px #fff, inset 0 0 0 2px #d0d4da; }
input[type=checkbox]:checked::after { content: ""; position: absolute; left: 4px; top: 1px; width: 3px; height: 6px; border: solid #3c5c92; border-width: 0 2px 2px 0; transform: rotate(35deg); }
input[type=checkbox]:disabled { border-color: #a9a9a9; }
input[type=checkbox]:disabled:checked::after { border-color: #a9bcd6; }
input.all[type=checkbox] { background: #fff; border-color: #333; box-shadow: none; }
.gridfoot { height: 16px; border-top: 1px solid #7ba1cf; display: flex; line-height: 14px; white-space: nowrap; }
.gridfoot span { background: #d6d6d6; padding-left: 2px; border-right: 1px solid #7ba1cf; }
.w65 { width: 65px; } .w88 { width: 88px; } .w140 { width: 140px; } .w170 { width: 170px; } .w196 { width: 196px; } .w260 { width: 260px; }
.scroll { width: 17px; display: flex; flex-direction: column; background: #adc8e7; }
.up, .down { height: 17px; display: flex; align-items: center; justify-content: center; }
.up::after, .down::after { content: ""; border: 4px solid transparent; }
.up::after { border-bottom-color: #000; border-top: 0; }
.down::after { border-top-color: #000; border-bottom: 0; }
.rest { flex: 1; background: #d6d6d6; }
.mainthumb { height: 206px; }
.rest.above { flex: none; height: 147px; }
.fill { flex: 1; }

.detail { flex: 1; display: flex; flex-direction: column; font-family: "Liberation Sans", Arial, sans-serif; }
.dtabs { display: flex; }
.dtabs button { height: 20px; padding: 0 10px; background: #ffe49c; border: 1px solid #7ba1cf; border-bottom: 0; font-weight: bold; }
.dbody { flex: 1; border: 1px solid #7ba1cf; display: flex; padding: 7px 10px 0; }
.fields { display: grid; grid-template-columns: 104px 272px 128px 327px; grid-auto-rows: 24px; align-items: center; }
.photo { width: 118px; height: 119px; border: 1px solid #7ba1cf; }

.dlg { position: absolute; display: flex; flex-direction: column; background: #cbdbf1; border: 1px solid #6496c7; }
.import { left: 314px; top: 36px; width: 919px; box-shadow: 1px 1px 2px #8ba8cc; }
.show { left: 619px; top: 20px; width: 860px; box-shadow: 2px 2px 5px rgba(40, 70, 110, .45); }
.dtitle { height: 30px; padding: 0 4px 0 2px; font: 12px/30px Roboto, Tahoma, sans-serif; background: #9cb9da; white-space: nowrap; }
.show .dtitle { height: 31px; display: flex; justify-content: space-between; background: #6496c7; color: #fff; }
.dctl { display: flex; align-items: center; gap: 9px; }
.dctl svg { width: 12px; height: 12px; }
.wizard { display: flex; margin-left: 1px; border: solid #7ba1cf; border-width: 1px 0 1px 1px; }
.steps { width: 141px; flex: none; border-right: 1px solid #7ba1cf; font-family: "Liberation Sans", Arial, sans-serif; }
.steps li { height: 43px; padding-left: 6px; line-height: 40px; border-bottom: 1px solid #7ba1cf; }
.steps .on { background: #ffe49c; font-weight: bold; }
.stepbody { flex: 1; min-width: 0; padding: 8px 8px 7px; font-family: "Liberation Sans", Arial, sans-serif; }
.hint { height: 40px; line-height: 12px; margin-bottom: 7px; padding: 2px 0 0 2px; border-bottom: 1px solid #7ba1cf; white-space: nowrap; }
.tabs { display: flex; height: 19px; font-family: "Liberation Sans", Arial, sans-serif; }
.tabs button { width: 110px; border: 1px solid #7ba1cf; border-bottom: 0; border-left: 0; }
.tabs .on { width: 107px; background: #ffe49c; font-weight: bold; border-left: 1px solid #7ba1cf; }
.note { display: flex; align-items: center; margin-top: 7px; height: 25px; }
.balloon { width: 28px; height: 24px; margin: 0 12px 0 26px; }
.btn { width: 80px; height: 25px; display: flex; align-items: center; background: #adc8e7; border: 1px solid #6f9bd1; padding: 0 3px; font: 11px/14px "Liberation Sans", Arial, sans-serif; }
.btn span { flex: 1; text-align: center; }
.wide { width: 112px; justify-content: center; }
.dfoot { display: flex; gap: 8px; padding: 7px 11px 7px 9px; }
.push { margin-left: auto; }
.showbody { padding: 10px 10px 5px; }
.show .dfoot { padding: 7px 10px 8px 9px; }

.marks { position: absolute; left: 0; top: 0; width: 100%; height: 100%; pointer-events: none; filter: drop-shadow(4px 4px 2px rgba(0, 0, 0, .4)); }
```
